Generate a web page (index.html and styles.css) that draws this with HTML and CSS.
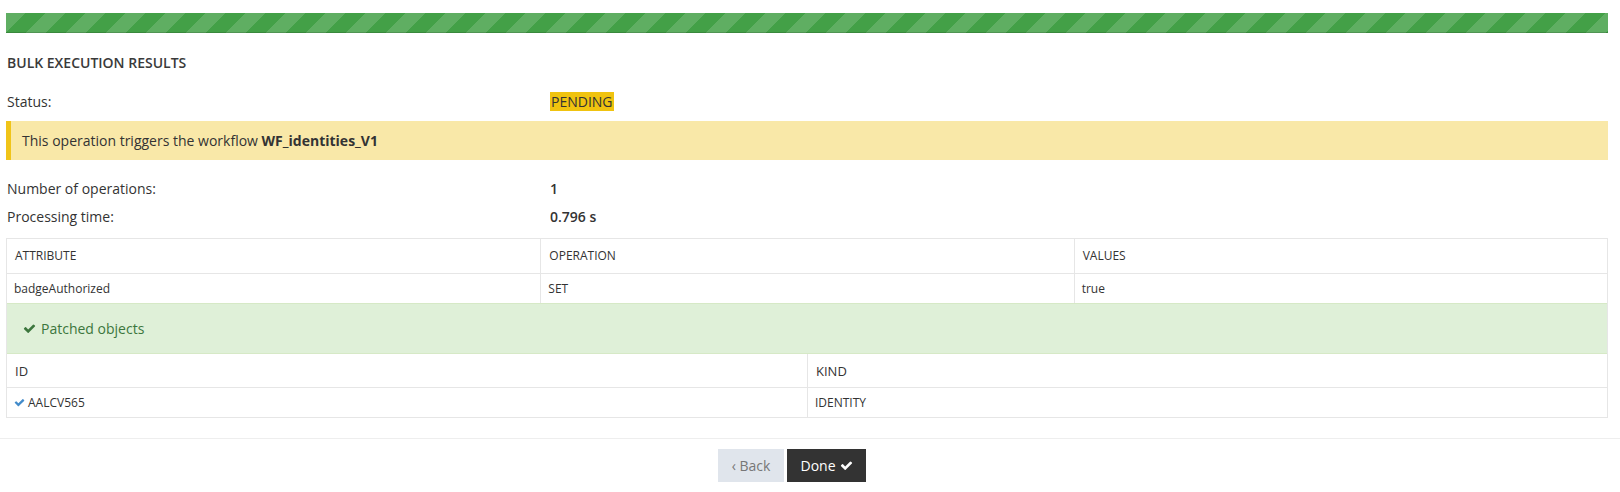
FILE: index.html
```html
<!DOCTYPE html>
<html>
<head>
<meta charset="utf-8">
<link rel="stylesheet" href="styles.css">
</head>
<body>
<div class="page">
  <div class="progress"><div class="progress-bar"></div></div>
  <h4 class="title">BULK EXECUTION RESULTS</h4>
  <div class="kv status-row">
    <div class="k">Status:</div>
    <div class="v"><span class="label-pending">PENDING</span></div>
  </div>
  <div class="alert-warning">This operation triggers the workflow <b>WF_identities_V1</b></div>
  <div class="kv first">
    <div class="k">Number of operations:</div>
    <div class="v strong">1</div>
  </div>
  <div class="kv">
    <div class="k">Processing time:</div>
    <div class="v strong">0.796 s</div>
  </div>
  <div class="results">
    <div class="grid3 head">
      <div class="cell">ATTRIBUTE</div>
      <div class="cell">OPERATION</div>
      <div class="cell">VALUES</div>
    </div>
    <div class="grid3 row">
      <div class="cell">badgeAuthorized</div>
      <div class="cell">SET</div>
      <div class="cell">true</div>
    </div>
    <div class="success">
      <svg class="ico" viewBox="0 0 1792 1792"><path d="M1671 566q0 40-28 68l-724 724-136 136q-28 28-68 28t-68-28l-136-136-362-362q-28-28-28-68t28-68l136-136q28-28 68-28t68 28l294 295 656-657q28-28 68-28t68 28l136 136q28 28 28 68z"/></svg>
      <span>Patched objects</span>
    </div>
    <div class="grid2 head2">
      <div class="cell">ID</div>
      <div class="cell">KIND</div>
    </div>
    <div class="grid2 row2">
      <div class="cell"><svg class="ico blue" viewBox="0 0 1792 1792"><path d="M1671 566q0 40-28 68l-724 724-136 136q-28 28-68 28t-68-28l-136-136-362-362q-28-28-28-68t28-68l136-136q28-28 68-28t68 28l294 295 656-657q28-28 68-28t68 28l136 136q28 28 28 68z"/></svg>AALCV565</div>
      <div class="cell">IDENTITY</div>
    </div>
  </div>
</div>
<div class="footer">
  <button class="btn btn-back">&#8249; Back</button>
  <button class="btn btn-done">Done <svg class="ico white" viewBox="0 0 1792 1792"><path d="M1671 566q0 40-28 68l-724 724-136 136q-28 28-68 28t-68-28l-136-136-362-362q-28-28-28-68t28-68l136-136q28-28 68-28t68 28l294 295 656-657q28-28 68-28t68 28l136 136q28 28 28 68z"/></svg></button>
</div>
</body>
</html>
```
FILE: styles.css
```css
html, body {
  margin: 0;
  padding: 0;
  background: #fff;
  font-family: "Open Sans", "Liberation Sans", sans-serif;
  font-size: 14px;
  line-height: 20px;
  color: #333;
}
.page {
  padding: 13px 12px 0 6px;
}
.progress {
  height: 20px;
  background: #f5f5f5;
}
.progress-bar {
  height: 20px;
  background-color: #43a047;
  background-image: repeating-linear-gradient(135deg,
    rgba(255,255,255,.15) 0, rgba(255,255,255,.15) 14.14px,
    transparent 14.14px, transparent 28.28px);
  box-shadow: inset 0 -1px 0 rgba(0,0,0,.15);
}
.title {
  margin: 20px 0 0 1px;
  font-size: 14px;
  font-weight: 600;
  line-height: 20px;
  color: #3a3a3a;
}
.kv {
  display: grid;
  grid-template-columns: 544px 1fr;
  height: 28px;
  align-items: center;
}
.kv .k { padding-left: 1px; }
.status-row {
  margin-top: 15px;
}
.label-pending {
  display: inline-block;
  background: #f0c30f;
  padding: 0 1px;
  line-height: 19px;
}
.strong { font-weight: 600; }
.alert-warning {
  margin-top: 5px;
  height: 39px;
  box-sizing: border-box;
  background: #f9e8a8;
  border-left: 5px solid #f0c419;
  padding: 10px 0 0 11px;
  color: #333;
}
.alert-warning b { font-weight: 700; }
.kv.first { margin-top: 15px; }
.results {
  margin-top: 7px;
  border: 1px solid #e6e6e6;
}
.grid3 {
  display: grid;
  grid-template-columns: 1fr 1fr 1fr;
}
.grid2 {
  display: grid;
  grid-template-columns: 1fr 1fr;
}
.cell {
  border-left: 1px solid #e6e6e6;
  padding-left: 7px;
  display: flex;
  align-items: center;
  font-size: 12px;
}
.cell:first-child { border-left: none; }
.head { height: 34px; border-bottom: 1px solid #e6e6e6; }
.head .cell { font-size: 12px; padding-left: 8px; }
.row { height: 29px; }
.success {
  height: 49px;
  background: #dff0d8;
  border-top: 1px solid #d6e9c6;
  border-bottom: 1px solid #d6e9c6;
  color: #3c763d;
  display: flex;
  align-items: center;
  padding-left: 16px;
  font-size: 14px;
}
.success .ico {
  width: 13px;
  height: 13px;
  fill: #3c763d;
  margin-right: 5px;
}
.head2 { height: 33px; border-bottom: 1px solid #e6e6e6; }
.head2 .cell { font-size: 13px; padding-left: 8px; }
.row2 { height: 29px; }
.row2 .cell { font-size: 12px; }
.ico.blue {
  width: 11px;
  height: 11px;
  fill: #428bca;
  margin-right: 3px;
}
.footer {
  margin-top: 20px;
  border-top: 1px solid #eee;
  padding: 10px 36px 0 0;
  display: flex;
  justify-content: center;
  gap: 3px;
}
.btn {
  height: 33px;
  border: none;
  border-radius: 0;
  font-family: "Open Sans", "Liberation Sans", sans-serif;
  font-size: 14px;
  padding: 0 12px;
  display: flex;
  align-items: center;
}
.btn-back {
  width: 66px;
  background: #e0e5ec;
  color: #777;
  justify-content: center;
}
.btn-done {
  width: 79px;
  background: #333;
  color: #fff;
  justify-content: center;
}
.ico.white {
  width: 13px;
  height: 13px;
  fill: #fff;
  margin-left: 4px;
}
```
